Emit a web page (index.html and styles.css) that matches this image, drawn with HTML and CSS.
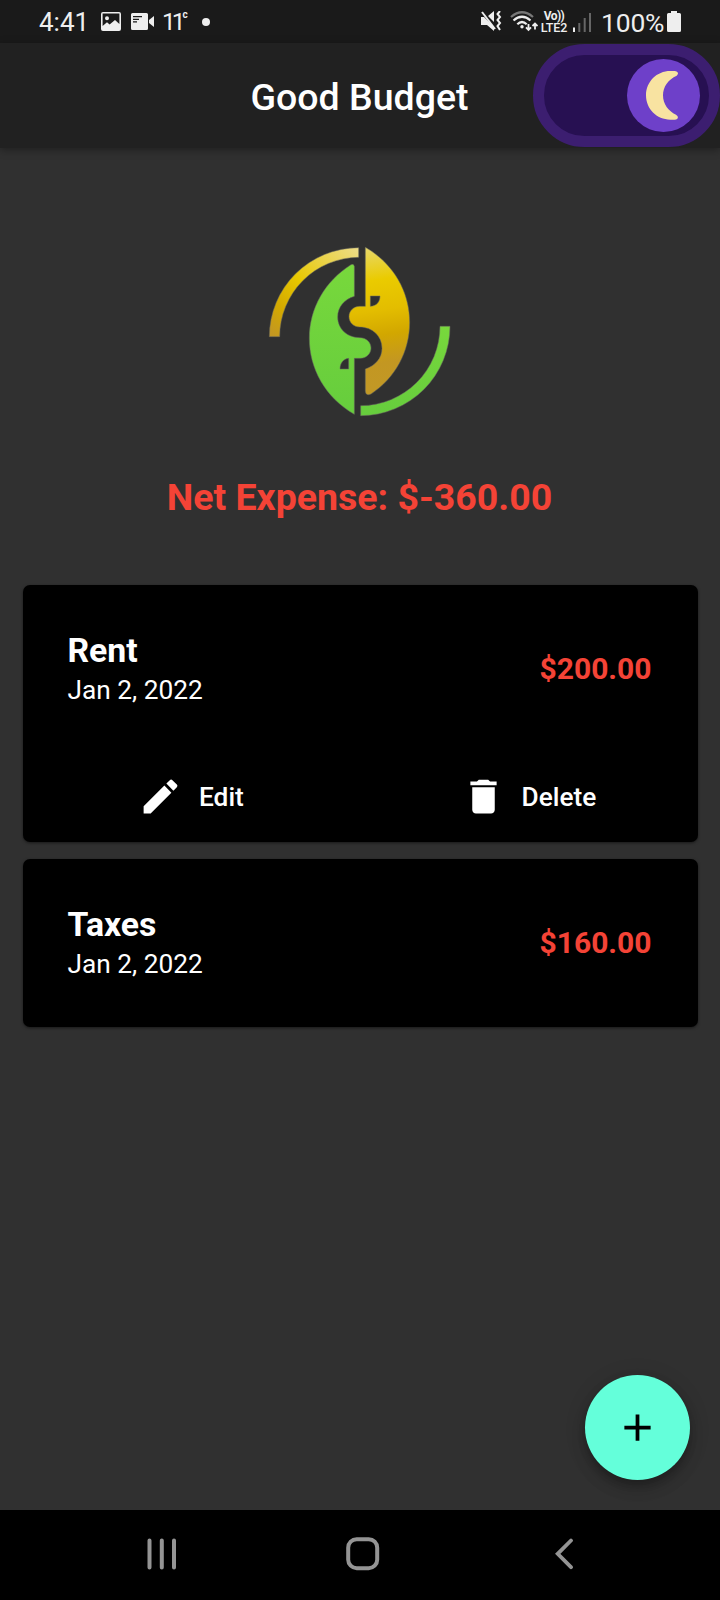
FILE: index.html
```html
<!DOCTYPE html>
<html lang="en">
<head>
<meta charset="utf-8">
<title>Good Budget</title>
<link rel="stylesheet" href="styles.css">
</head>
<body>
<div class="screen">
  <header class="status">
    <div class="status-left">
      <span class="clock">4:41</span>
      <svg class="ic-photo" width="20" height="20" viewBox="0 0 20 20"><path fill="#eee" fill-rule="evenodd" d="M2 0H18Q20 0 20 2V17Q20 19 18 19H2Q0 19 0 17V2Q0 0 2 0ZM1.600 1.600V14L6 10.200 8.600 12.500 14 8 18.400 12V1.600ZM6 4.200A2 2 0 1 1 6 8.200A2 2 0 1 1 6 4.200Z"/></svg>
      <svg class="ic-cam" width="24" height="18" viewBox="0 0 24 18"><path fill="#eee" d="M1.500 0H15.500Q17 0 17 1.500V15.500Q17 17 15.500 17H1.500Q0 17 0 15.500V1.500Q0 0 1.500 0ZM18 7L23 3V14L18 10Z"/><path stroke="#1a1a1a" stroke-width="1.200" d="M2 3.700H11M2 6.300H8M2 8.800H6"/></svg>
      <span class="temp">11<span class="deg">c</span></span>
      <span class="dot"></span>
    </div>
    <div class="status-right">
      <svg width="21" height="21" viewBox="0 0 21 21"><path fill="#eee" d="M0 6H3L13 16V20L6 14H0ZM7 5L13 0V11Z"/><path fill="none" stroke="#eee" stroke-width="2" d="M1 1L14 18"/><path fill="none" stroke="#eee" stroke-width="2" d="M19 0L16.500 3 19 6 16.500 9 19 12 16.500 15 19 19"/></svg>
      <svg class="ic-wifi" width="28" height="21" viewBox="0 0 28 21"><g fill="none" stroke-width="2.200"><path stroke="#777" d="M1 6Q12-3.500 23 6"/><path stroke="#eee" d="M3.500 9.500Q12 2 20.500 9.500M7.300 13.200Q12 8.800 16.700 13.200"/></g><circle cx="12" cy="15.800" r="1.700" fill="#eee"/><path fill="none" stroke="#eee" stroke-width="1.800" d="M18.500 13V19M16 16.300L18.500 19 21 16.300M25 18.500V12.500M22.500 15L25 12.500 27.500 15"/></svg>
      <span class="lte"><span class="vo">Vo))</span><span>LTE2</span></span>
      <svg class="ic-signal" width="18" height="20" viewBox="0 0 18 20"><path fill="#eee" d="M0 15.500H2V20H0Z"/><path fill="#666" d="M5.300 11H7.300V20H5.300ZM10.700 6H12.700V20H10.700ZM16 1H18V20H16Z"/></svg>
      <span class="battery-text">100%</span>
      <svg class="ic-batt" width="14" height="21" viewBox="0 0 14 21"><path fill="#eee" d="M4 0H10V2H12.500Q14 2 14 3.500V19.500Q14 21 12.500 21H1.500Q0 21 0 19.500V3.500Q0 2 1.500 2H4Z"/></svg>
    </div>
  </header>

  <div class="appbar">
    <h1>Good Budget</h1>
    <div class="toggle"><div class="knob">
      <svg width="32" height="49" viewBox="0 0 96 147"><path fill="#f8e3a1" d="M73 0H85C97 0 99 9 92 14C67 25 51 47 51 73C51 99 67 121 90 131C99 137 97 146 86 146H73C32 146 0 114 0 73S32 0 73 0Z"/></svg>
    </div></div>
  </div>

  <main>
    <svg class="logo" width="210" height="190" viewBox="0 0 630 570">
      <defs>
        <linearGradient id="gold" gradientUnits="userSpaceOnUse" x1="350" y1="40" x2="410" y2="450"><stop offset="0" stop-color="#e8d765"/><stop offset=".23" stop-color="#eacb00"/><stop offset=".45" stop-color="#e3bd00"/><stop offset=".63" stop-color="#d2a700"/><stop offset=".83" stop-color="#c39722"/><stop offset="1" stop-color="#c29825"/></linearGradient>
        <linearGradient id="goldArc" gradientUnits="userSpaceOnUse" x1="310" y1="45" x2="60" y2="305"><stop offset="0" stop-color="#eddc85"/><stop offset=".25" stop-color="#ead34b"/><stop offset=".52" stop-color="#e8c800"/><stop offset=".8" stop-color="#d3a900"/><stop offset="1" stop-color="#c39722"/></linearGradient>
        <linearGradient id="green" x1="0" y1="0" x2="0" y2="1"><stop offset="0" stop-color="#78d83c"/><stop offset="1" stop-color="#66cd3d"/></linearGradient>
      </defs>
      <g stroke="#6b6b60" stroke-width="1.500">
        <path fill="url(#goldArc)" d="M43 305A269 267 0 0 1 311 38V67A238 238 0 0 0 74 305Z"/>
        <path fill="url(#green)" d="M555 274H585A268 268 0 0 1 317 542V512A238 238 0 0 0 555 274Z"/>
        <path fill="url(#green)" fill-rule="evenodd" d="M298 538C210 487 163 400 163 310C163 220 210 138 288 89Q296 85 298 94V184C268 193 248 216 248 246C248 281 276 308 314 308C334 308 348 322 348 339S334 370 316 370H298ZM281 370V402H255C255 384 266 371 281 370Z"/>
        <path fill="url(#gold)" fill-rule="evenodd" d="M331 37C415 85 464 170 464 262C464 350 420 430 348 477Q332 484 331 468V402C361 392 381 370 381 340C381 303 352 276 314 276C296 276 282 262 282 245S296 214 314 214H331ZM346 183H375C375 200 365 213 346 214Z"/>
      </g>
    </svg>
    <p class="net">Net Expense: $-360.00</p>

    <section class="card">
      <div class="row">
        <div class="info"><h2>Rent</h2><p class="date">Jan 2, 2022</p></div>
        <span class="amount">$200.00</span>
      </div>
      <div class="actions">
        <button class="action edit"><svg width="45" height="45" viewBox="0 0 24 24"><path fill="#fff" d="M3 17.250V21h3.750L17.810 9.940l-3.750-3.750L3 17.250zM20.710 7.040c.39-.39.39-1.020 0-1.410l-2.340-2.340c-.39-.39-1.020-.39-1.410 0l-1.830 1.830 3.750 3.750 1.830-1.830z"/></svg><span>Edit</span></button>
        <button class="action delete"><svg width="45" height="45" viewBox="0 0 24 24"><path fill="#fff" d="M6 19c0 1.100.9 2 2 2h8c1.100 0 2-.9 2-2V7H6v12zM19 4h-3.500l-1-1h-5l-1 1H5v2h14V4z"/></svg><span>Delete</span></button>
      </div>
    </section>
    <section class="card">
      <div class="row">
        <div class="info"><h2>Taxes</h2><p class="date">Jan 2, 2022</p></div>
        <span class="amount">$160.00</span>
      </div>
    </section>
    <button class="fab" aria-label="Add"><svg width="45" height="45" viewBox="0 0 24 24"><path d="M19 13h-6v6h-2v-6H5v-2h6V5h2v6h6v2z"/></svg></button>
  </main>

  <nav class="navbar">
    <svg width="30" height="32" viewBox="0 0 30 32"><path stroke="#949494" stroke-width="4" stroke-linecap="round" d="M2.500 2.500V29.500M14.800 2.500V29.500M27 2.500V29.500"/></svg>
    <svg class="home" width="34" height="34" viewBox="0 0 34 34"><rect x="2.200" y="2.200" width="29" height="29" rx="8.500" fill="none" stroke="#949494" stroke-width="4"/></svg>
    <svg class="back" width="19" height="32" viewBox="0 0 19 32"><path fill="none" stroke="#949494" stroke-width="3.800" stroke-linecap="round" d="M16 2.500L2.700 15.800 16 29.200"/></svg>
  </nav>
</div>
</body>
</html>
```

FILE: styles.css
```css
* { box-sizing: border-box; margin: 0; padding: 0; }
body { background: #303030; font-family: Roboto, sans-serif; color: #fff; }
.screen { width: 720px; height: 1600px; display: flex; flex-direction: column; overflow: hidden; }
svg { display: block; flex: none; }
button { border: 0; background: none; color: inherit; font: inherit; }

.status { height: 43px; flex: none; background: #1a1a1a; color: #eee; display: flex; justify-content: space-between; padding: 0 39px; white-space: nowrap; }
.status-left, .status-right { display: flex; align-items: center; }
.clock { width: 62px; font-size: 26px; line-height: 43px; padding-top: 1px; }
.ic-photo { margin-top: 1px; }
.ic-cam { margin-left: 10px; }
.temp { width: 30px; margin-left: 7px; font-size: 24.500px; letter-spacing: -4px; display: flex; line-height: 43px; }
.deg { font-size: 10px; font-weight: 700; line-height: 29px; margin-left: 1px; letter-spacing: 0; }
.dot { width: 8px; height: 8px; border-radius: 50%; background: #eee; margin-left: 10px; }
.ic-wifi { margin-left: 8px; }
.lte { width: 28px; margin-left: 2px; display: flex; flex-direction: column; align-items: center; font-size: 12.500px; font-weight: 500; line-height: 11px; letter-spacing: -.1px; }
.vo { font-size: 12px; font-weight: 700; letter-spacing: -.6px; }
.ic-signal { margin: 1px 10px 0 5px; }
.battery-text { width: 66px; font-size: 26.500px; line-height: 43px; padding-top: 1px; letter-spacing: -.2px; }

.appbar { height: 105px; flex: none; background: #212121; display: flex; align-items: center; justify-content: space-between; padding-left: 250.500px; box-shadow: 0 2px 8px rgba(0,0,0,.35); }
.appbar h1 { font-size: 37.500px; font-weight: 500; white-space: nowrap; padding-top: 3px; }
.toggle { width: 187px; height: 103px; border: 11px solid #3c1e70; border-radius: 52px; background: #271052; display: flex; align-items: center; justify-content: flex-end; padding-right: 9px; }
.knob { width: 73px; height: 73px; border-radius: 50%; background: #6e40c9; display: flex; align-items: center; padding-left: 19px; }

main { flex: 1; display: flex; flex-direction: column; align-items: center; padding: 87px 22px 0; }
.net { color: #f44336; font-size: 37.500px; font-weight: 700; line-height: 44px; margin: 50px 1px 66px 0; white-space: nowrap; }
.card { width: 675px; background: #000; border-radius: 7px; padding: 45px 46px 44px 45px; margin-bottom: 17px; box-shadow: 0 1px 3px rgba(0,0,0,.5); }
.row { display: flex; align-items: center; justify-content: space-between; height: 79px; }
.info { padding-top: 2px; }
.card h2 { font-size: 33.750px; font-weight: 700; line-height: 40px; }
.date { font-size: 26.250px; line-height: 39px; }
.amount { color: #f44336; font-size: 30px; font-weight: 700; padding-bottom: 2px; }
.actions { display: grid; grid-template-columns: 1fr 1fr; margin: 65px -46px -21px -45px; height: 45px; }
.action { display: flex; align-items: center; gap: 16px; font-size: 26.250px; font-weight: 500; }
.edit { padding-left: 115.500px; }
.delete { padding-left: 100.500px; }
.fab { width: 105px; height: 105px; border-radius: 50%; background: #64ffda; display: flex; align-items: center; justify-content: center; align-self: flex-end; margin: auto 8px 30px 0; box-shadow: 0 6px 9px -2px rgba(0,0,0,.2), 0 9px 15px rgba(0,0,0,.14), 0 2px 22px rgba(0,0,0,.12); }

.navbar { height: 90px; flex: none; background: #000; display: flex; align-items: center; padding: 0 0 2px 147px; }
.home { margin-left: 169px; }
.back { margin-left: 175px; }
```
